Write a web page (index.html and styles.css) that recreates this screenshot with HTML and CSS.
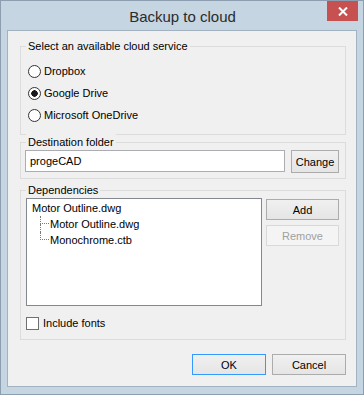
FILE: index.html
```html
<!DOCTYPE html>
<html lang="en">
<head>
    <meta charset="UTF-8">
    <title>Backup to cloud</title>
    <link rel="stylesheet" href="styles.css">
</head>
<body>
    <div class="window">
        <div class="titlebar">
            <span></span>
            <span class="title">Backup to cloud</span>
            <button type="button" class="close-btn" aria-label="Close">
                <svg width="10" height="9" viewBox="0 0 10 9">
                    <path d="M1 0.5 L9 8.5 M9 0.5 L1 8.5" stroke="#fff" stroke-width="2" fill="none"/>
                </svg>
            </button>
        </div>

        <div class="client">
            <div class="group group-service">
                <div class="group-title">Select an available cloud service</div>
                <label class="option"><input type="radio" name="service"> Dropbox</label>
                <label class="option"><input type="radio" name="service" checked> Google Drive</label>
                <label class="option"><input type="radio" name="service"> Microsoft OneDrive</label>
            </div>

            <div class="group group-dest">
                <div class="group-title">Destination folder</div>
                <div class="dest-row">
                    <input type="text" class="text-input" value="progeCAD">
                    <button type="button" class="btn btn-change">Change</button>
                </div>
            </div>

            <div class="group group-deps">
                <div class="group-title">Dependencies</div>
                <div class="deps-row">
                    <div class="listbox">
                        <div class="tree-row">Motor Outline.dwg</div>
                        <div class="tree-children">
                            <div class="tree-row child"><span class="elbow"></span>Motor Outline.dwg</div>
                            <div class="tree-row child last"><span class="elbow"></span>Monochrome.ctb</div>
                        </div>
                    </div>
                    <div class="side-buttons">
                        <button type="button" class="btn">Add</button>
                        <button type="button" class="btn" disabled>Remove</button>
                    </div>
                </div>
                <label class="option check"><input type="checkbox"> Include fonts</label>
            </div>

            <div class="footer-buttons">
                <button type="button" class="btn btn-default">OK</button>
                <button type="button" class="btn">Cancel</button>
            </div>
        </div>
    </div>
</body>
</html>
```

FILE: styles.css
```css
body {
    margin: 0;
    font-family: "Segoe UI", "Liberation Sans", Arial, sans-serif;
    font-size: 11px;
    color: #000;
    background: #fff;
}
.window {
    width: 364px;
    height: 395px;
    box-sizing: border-box;
    border: 1px solid #8c9eb0;
    background-color: #c5d5e2;
    display: flex;
    flex-direction: column;
    padding: 0 6px 7px 6px;
}
.titlebar {
    height: 29px;
    display: grid;
    grid-template-columns: 1fr auto 1fr;
    align-items: start;
    margin: 0 -1px 0 0;
}
.title {
    font-size: 15px;
    color: #2b2b2b;
    line-height: 20px;
    padding-top: 6px;
}
.close-btn {
    justify-self: end;
    width: 31px;
    height: 20px;
    border: none;
    padding: 0;
    margin-right: 0;
    background-color: #c75050;
    display: flex;
    align-items: center;
    justify-content: center;
}
.client {
    flex: 1;
    background-color: #f0f0f0;
    border: 1px solid #a3b2c0;
    display: flex;
    flex-direction: column;
    padding: 15px 10px 0 12px;
}
.group {
    border: 1px solid #dcdcdc;
    display: flex;
    flex-direction: column;
}
.group-title {
    margin: -9px 0 0 5px;
    padding: 0 2px;
    width: fit-content;
    background-color: #f0f0f0;
    line-height: 16px;
}
.group-service {
    height: 87px;
}
.option {
    display: flex;
    align-items: center;
    height: 16px;
    margin: 6px 0 0 7px;
    gap: 3px;
}
.group-service .option:first-of-type {
    margin-top: 9px;
}
.option input {
    appearance: none;
    margin: 0;
    width: 13px;
    height: 13px;
    border: 1px solid #333;
    background-color: #fff;
    box-sizing: border-box;
}
.option input[type="radio"] {
    border-radius: 50%;
}
.option input[type="radio"]:checked {
    background: radial-gradient(circle, #1a1a1a 0 3px, #fff 3.5px);
}
.option input[type="checkbox"] {
    border-color: #707070;
}
.group-dest {
    margin-top: 7px;
    height: 35px;
}
.dest-row {
    display: flex;
    gap: 6px;
    margin: 0 6px 0 4px;
}
.text-input {
    width: 261px;
    height: 22px;
    box-sizing: border-box;
    border: 1px solid #abadb3;
    padding: 0 4px;
    font: inherit;
    background-color: #fff;
}
.btn {
    font: inherit;
    height: 21px;
    box-sizing: border-box;
    border: 1px solid #acacac;
    background: linear-gradient(#f0f0f0, #e5e5e5);
    padding: 0;
    color: #000;
}
.btn-change {
    width: 48px;
    height: 23px;
}
.btn:disabled {
    border-color: #d9d9d9;
    background: #f4f4f4;
    color: #a0a0a0;
}
.btn-default {
    border-color: #3399ff;
}
.group-deps {
    margin-top: 11px;
    height: 148px;
}
.deps-row {
    display: flex;
    gap: 4px;
    margin: 0 6px 0 5px;
}
.listbox {
    width: 236px;
    height: 108px;
    box-sizing: border-box;
    border: 1px solid #828790;
    background-color: #fff;
    padding: 1px 0 0 5px;
}
.tree-row {
    height: 16px;
    line-height: 16px;
    display: flex;
}
.tree-children {
    padding-left: 8px;
}
.elbow {
    width: 9px;
    height: 16px;
    display: flex;
    flex-direction: column;
    margin-right: 1px;
}
.elbow::before {
    content: "";
    height: 8px;
    border-left: 1px dotted #7a7a7a;
    border-bottom: 1px dotted #7a7a7a;
    box-sizing: border-box;
}
.elbow::after {
    content: "";
    height: 8px;
    border-left: 1px dotted #7a7a7a;
}
.last .elbow::after {
    border-left: none;
}
.side-buttons {
    display: flex;
    flex-direction: column;
    gap: 5px;
    padding-top: 1px;
}
.side-buttons .btn {
    width: 73px;
}
.option.check {
    margin: 9px 0 0 5px;
    gap: 4px;
}
.footer-buttons {
    display: flex;
    justify-content: flex-end;
    gap: 6px;
    margin-top: 14px;
}
.footer-buttons .btn {
    width: 74px;
}
```
